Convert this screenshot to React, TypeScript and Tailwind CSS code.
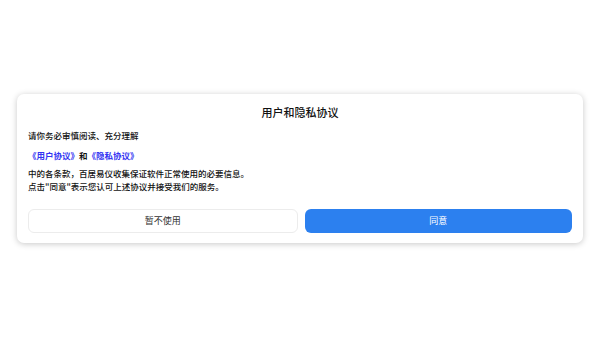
import React from "react";

const cjk = { fontFamily: '"Noto Sans CJK SC", "Noto Sans", sans-serif' };

export default function App() {
  return (
    <div className="min-h-screen w-full bg-white flex items-center justify-center px-[17px]" style={cjk}>
      {/* Privacy agreement dialog */}
      <div className="w-full h-[149px] bg-white rounded-[7px] shadow-[0_1px_6px_rgba(0,0,0,0.22)] px-[11px] pt-[10px] pb-[10px] flex flex-col">
        <h2 className="text-center text-[11px] leading-[16px] font-medium text-[#111]">用户和隐私协议</h2>

        <p className="mt-[9px] text-[8.5px] leading-[13px] font-medium text-[#111]">请你务必审慎阅读、充分理解</p>

        <p className="mt-[7px] text-[8.5px] leading-[13px] text-[#111] font-semibold">
          <span className="text-[#3434f2]">《用户协议》</span>和<span className="text-[#3434f2]">《隐私协议》</span>
        </p>

        <div className="mt-[5px] text-[8.5px] leading-[13px] font-medium text-[#111]">
          <p>中的各条款，百居易仪收集保证软件正常使用的必要信息。</p>
          <p>点击"同意"表示您认可上述协议并接受我们的服务。</p>
        </div>

        <div className="mt-auto flex gap-[7px]">
          <button className="flex-1 h-[24px] rounded-[6px] border border-[#ececec] bg-white text-[9px] text-[#333]">
            暂不使用
          </button>
          <button className="flex-1 h-[24px] rounded-[6px] bg-[#2c80ef] text-[9px] text-white">
            同意
          </button>
        </div>
      </div>
    </div>
  );
}
